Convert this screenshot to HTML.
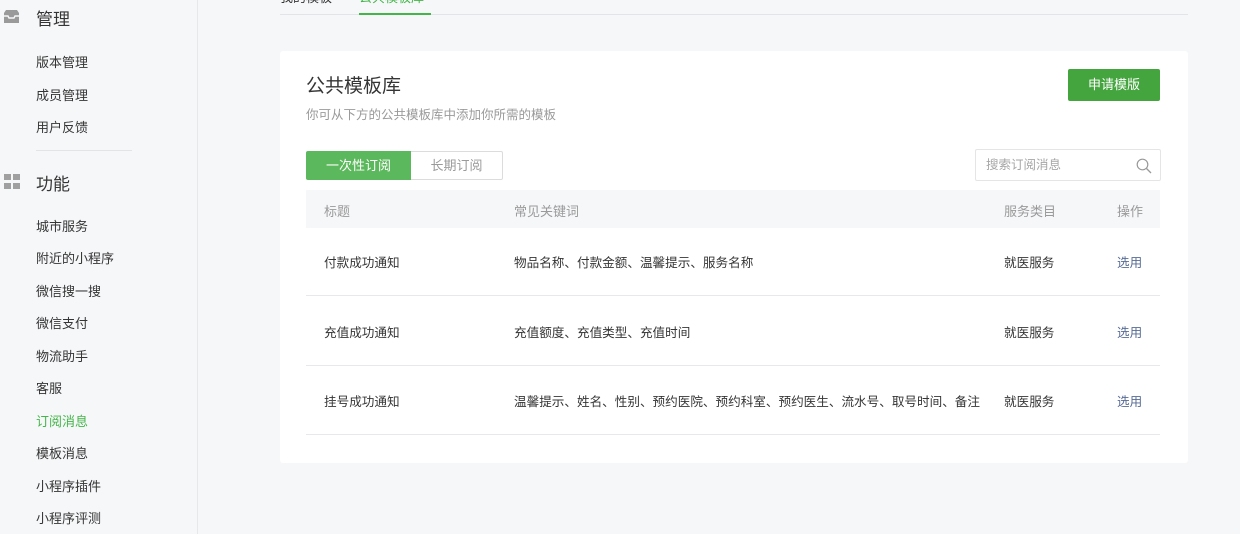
<!DOCTYPE html>
<html><head><meta charset="utf-8"><style>
*{margin:0;padding:0;box-sizing:border-box}
body{width:1240px;height:534px;overflow:hidden;background:#f6f7f9;font-family:"Liberation Sans","Noto Sans CJK SC",sans-serif;position:relative;color:#353535}
.side{position:absolute;left:0;top:0;width:198px;height:534px;background:#f6f7f9;border-right:1px solid #e7e8eb}
.h{position:absolute;left:36px;font-size:17px;color:#353535}
.it{position:absolute;left:36px;font-size:13px;color:#353535}
.card{position:absolute;left:280px;top:51px;width:908px;height:412px;background:#fff;border-radius:3px}
.abs{position:absolute}
.row{position:absolute;left:26px;width:854px;height:70px;border-bottom:1px solid #e7e8eb;font-size:12.6px}
.row span{position:absolute;top:26px}
</style></head><body>
<div class="side">
<svg class="abs" style="left:3px;top:9px" width="17" height="15" viewBox="0 0 17 15"><path d="M1 4 L3 1 H14 L16 4 V14 H1 Z" fill="#9a9a9a"/><path d="M1 7 H5 L6 9 H11 L12 7 H16" stroke="#f6f7f9" stroke-width="1.4" fill="none"/></svg>
<div class="h" style="top:5px">管理</div>
<div class="it" style="top:52px">版本管理</div>
<div class="it" style="top:85px">成员管理</div>
<div class="it" style="top:117px">用户反馈</div>
<div class="abs" style="left:36px;top:150px;width:96px;height:1px;background:#e3e4e7"></div>
<div class="abs" style="left:4px;top:174px;width:7px;height:6px;background:#a0a0a0"></div>
<div class="abs" style="left:13px;top:174px;width:7px;height:6px;background:#a0a0a0"></div>
<div class="abs" style="left:4px;top:183px;width:7px;height:6px;background:#a0a0a0"></div>
<div class="abs" style="left:13px;top:183px;width:7px;height:6px;background:#a0a0a0"></div>
<div class="h" style="top:170px">功能</div>
<div class="it" style="top:216px">城市服务</div>
<div class="it" style="top:248px">附近的小程序</div>
<div class="it" style="top:281px">微信搜一搜</div>
<div class="it" style="top:313px">微信支付</div>
<div class="it" style="top:346px">物流助手</div>
<div class="it" style="top:378px">客服</div>
<div class="it" style="top:411px;color:#44b549">订阅消息</div>
<div class="it" style="top:443px">模板消息</div>
<div class="it" style="top:476px">小程序插件</div>
<div class="it" style="top:508px">小程序评测</div>
</div>
<div class="abs" style="left:280px;top:-13px;font-size:13px;color:#353535">我的模板</div>
<div class="abs" style="left:359px;top:-13px;font-size:13px;color:#44b549">公共模板库</div>
<div class="abs" style="left:280px;top:14px;width:908px;height:1px;background:#e3e4e7"></div>
<div class="abs" style="left:359px;top:13px;width:72px;height:2px;background:#44b549"></div>
<div class="card">
<div class="abs" style="left:26px;top:20px;font-size:19px;color:#353535">公共模板库</div>
<div class="abs" style="left:26px;top:53px;font-size:12.5px;color:#9a9a9a">你可从下方的公共模板库中添加你所需的模板</div>
<div class="abs" style="left:788px;top:18px;width:92px;height:32px;background:#44a53e;border-radius:2px;color:#fff;font-size:13px;text-align:center;line-height:32px">申请模版</div>
<div class="abs" style="left:26px;top:100px;width:105px;height:29px;background:#5cb85c;color:#fff;font-size:13px;text-align:center;line-height:29px;border-radius:2px 0 0 2px">一次性订阅</div>
<div class="abs" style="left:131px;top:100px;width:92px;height:29px;border:1px solid #dcdcdc;border-left:none;color:#9a9a9a;font-size:13px;text-align:center;line-height:27px;border-radius:0 2px 2px 0">长期订阅</div>
<div class="abs" style="left:695px;top:98px;width:186px;height:32px;border:1px solid #e5e5e5;border-radius:2px;color:#a6a6a6;font-size:12.5px;line-height:30px;padding-left:10px">搜索订阅消息</div>
<svg class="abs" style="left:856px;top:107px" width="16" height="16" viewBox="0 0 16 16"><circle cx="6.5" cy="6.5" r="5.3" stroke="#999" stroke-width="1.2" fill="none"/><path d="M10.5 10.5 L15 15" stroke="#999" stroke-width="1.3"/></svg>
<div class="abs" style="left:26px;top:139px;width:854px;height:38px;background:#f6f7f9;font-size:13px;color:#9a9a9a">
<span class="abs" style="left:18px;top:11px">标题</span><span class="abs" style="left:208px;top:11px">常见关键词</span><span class="abs" style="left:698px;top:11px">服务类目</span><span class="abs" style="left:811px;top:11px">操作</span></div>
<div class="row" style="top:175px"><span style="left:18px">付款成功通知</span><span style="left:208px">物品名称、付款金额、温馨提示、服务名称</span><span style="left:698px">就医服务</span><span style="left:811px;color:#576b95">选用</span></div>
<div class="row" style="top:245px"><span style="left:18px">充值成功通知</span><span style="left:208px">充值额度、充值类型、充值时间</span><span style="left:698px">就医服务</span><span style="left:811px;color:#576b95">选用</span></div>
<div class="row" style="top:314px"><span style="left:18px">挂号成功通知</span><span style="left:208px">温馨提示、姓名、性别、预约医院、预约科室、预约医生、流水号、取号时间、备注</span><span style="left:698px">就医服务</span><span style="left:811px;color:#576b95">选用</span></div>
</div>
</body></html>
